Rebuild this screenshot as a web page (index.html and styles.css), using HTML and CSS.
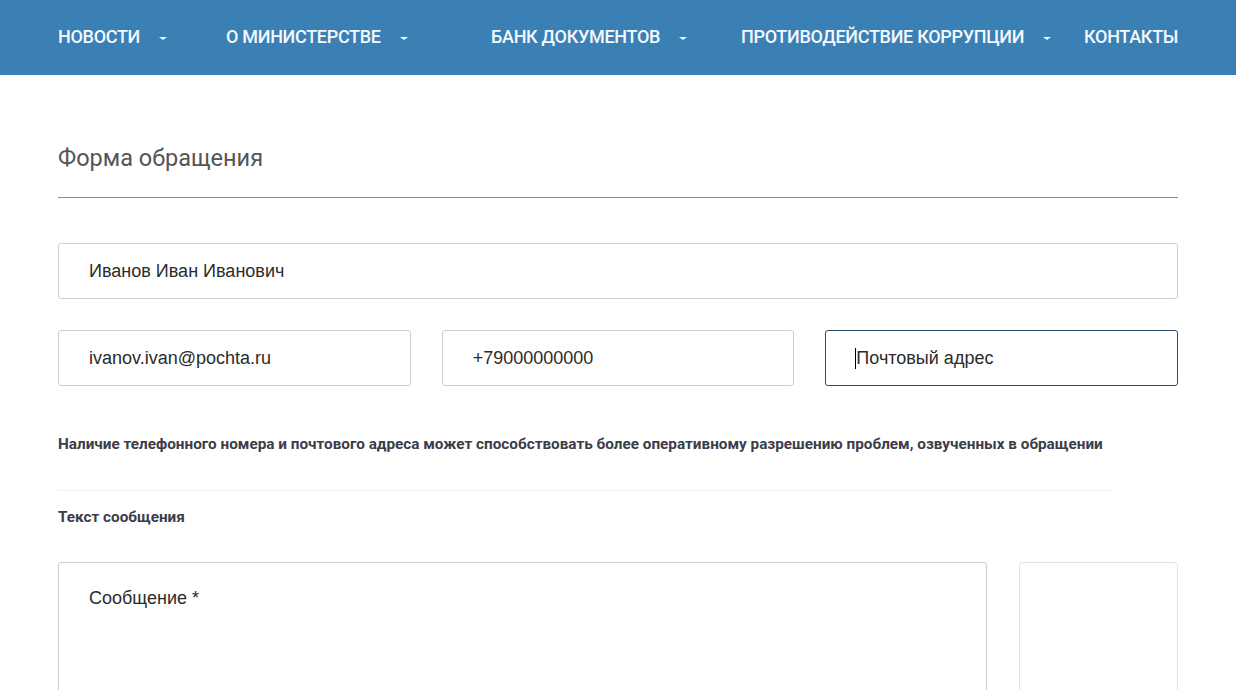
FILE: index.html
```html
<!DOCTYPE html>
<html lang="ru">
<head>
    <meta charset="UTF-8">
    <meta name="viewport" content="width=device-width, initial-scale=1.0">
    <title>Форма обращения</title>
    <link rel="stylesheet" href="styles.css">
</head>
<body>
    <header class="top-nav">
        <ul class="nav-list">
            <li class="nav-item">НОВОСТИ <span class="caret"></span></li>
            <li class="nav-item">О МИНИСТЕРСТВЕ <span class="caret"></span></li>
            <li class="nav-item">БАНК ДОКУМЕНТОВ <span class="caret"></span></li>
            <li class="nav-item">ПРОТИВОДЕЙСТВИЕ КОРРУПЦИИ <span class="caret"></span></li>
            <li class="nav-item">КОНТАКТЫ</li>
        </ul>
    </header>

    <main class="page">
        <h1 class="form-title">Форма обращения</h1>

        <form class="appeal-form">
            <input class="field" type="text" value="Иванов Иван Иванович">

            <div class="field-row">
                <input class="field" type="text" value="ivanov.ivan@pochta.ru">
                <input class="field" type="text" value="+79000000000">
                <input class="field focused" type="text" placeholder="Почтовый адрес">
            </div>

            <p class="form-note">Наличие телефонного номера и почтового адреса может способствовать более оперативному разрешению проблем, озвученных в обращении</p>

            <div class="form-label">Текст сообщения</div>

            <div class="message-row">
                <textarea class="field message" placeholder="Сообщение *"></textarea>
                <div class="side-box"></div>
            </div>
        </form>
    </main>
</body>
</html>
```

FILE: styles.css
```css
body {
    margin: 0;
    background-color: #fff;
    font-family: "Liberation Sans", Arial, sans-serif;
}

/* Верхнее меню */
.top-nav {
    background-color: #3b80b5;
    height: 75px;
}
.nav-list {
    display: grid;
    grid-template-columns: 168px 265px 250px 343px 1fr;
    align-items: center;
    height: 100%;
    margin: 0 58px;
    padding: 0 0 2px;
    list-style: none;
    box-sizing: border-box;
}
.nav-item {
    font-family: Roboto, sans-serif;
    font-weight: 500;
    font-size: 18px;
    letter-spacing: -0.3px;
    color: #f4f9fd;
    white-space: nowrap;
}
.caret {
    display: inline-block;
    width: 0;
    height: 0;
    margin-left: 15px;
    vertical-align: middle;
    border-left: 4px solid transparent;
    border-right: 4px solid transparent;
    border-top: 3px solid #f4f9fd;
}

/* Форма */
.page {
    margin: 0 58px;
}
.form-title {
    margin: 68px 0 0;
    padding-bottom: 24px;
    font-family: Roboto, sans-serif;
    font-weight: 400;
    font-size: 23.5px;
    line-height: 30px;
    color: #555;
    border-bottom: 1px solid #8a8a8a;
}
.appeal-form {
    padding-top: 45px;
}
.field {
    display: block;
    width: 100%;
    height: 56px;
    padding: 0 30px;
    border: 1px solid #cfcfcf;
    border-radius: 3px;
    box-sizing: border-box;
    font-family: "Liberation Sans", Arial, sans-serif;
    font-size: 18px;
    color: #2b2b2b;
    outline: none;
}
.field::placeholder {
    color: #2b2b2b;
}
.field.focused {
    border-color: #2d4c6e;
    padding-left: 29px;
}
.field.focused::placeholder {
    border-left: 1px solid #000;
}
.field-row {
    display: grid;
    grid-template-columns: 1fr 1fr 1fr;
    gap: 31px;
    margin-top: 31px;
}

.form-note {
    max-width: 1054px;
    margin: 0;
    padding: 49px 0 37px;
    font-family: Roboto, sans-serif;
    font-weight: 700;
    font-size: 15.3px;
    line-height: 18px;
    color: #3b3d4a;
    white-space: nowrap;
    border-bottom: 1px solid #f0f0f0;
}
.form-label {
    margin-top: 17px;
    font-family: Roboto, sans-serif;
    font-weight: 700;
    font-size: 15.3px;
    line-height: 18px;
    color: #3b3d4a;
}

.message-row {
    display: flex;
    gap: 32px;
    margin-top: 36px;
}
.message {
    flex: 1;
    height: 180px;
    padding-top: 25px;
    resize: none;
    box-shadow: 0 1px 2px rgba(0, 0, 0, 0.08);
}
.side-box {
    width: 159px;
    height: 180px;
    border: 1px solid #e2e2e2;
    border-radius: 3px;
    box-sizing: border-box;
}
```
